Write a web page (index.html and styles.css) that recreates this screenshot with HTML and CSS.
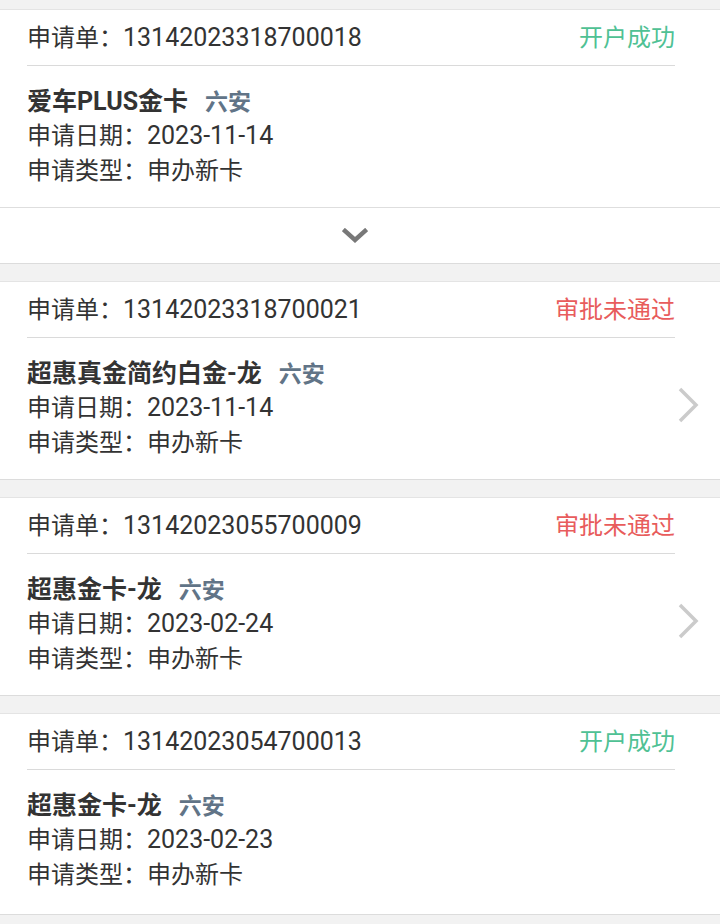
FILE: index.html
```html
<!DOCTYPE html>
<html lang="zh-CN">
<head>
<meta charset="utf-8">
<title>申请记录</title>
<link rel="stylesheet" href="styles.css">
</head>
<body>
<div class="list">
  <div class="group">
    <div class="card">
      <div class="head"><span class="no">申请单：<span class="num">13142023318700018</span></span><span class="status ok">开户成功</span></div>
      <div class="body">
        <div class="info">
          <div class="title">爱车PLUS金卡<span class="tag">六安</span></div>
          <div class="line">申请日期：<span class="num">2023-11-14</span></div>
          <div class="line">申请类型：申办新卡</div>
        </div>
      </div>
    </div>
    <div class="more">
      <svg width="26" height="16" viewBox="0 0 26 16"><polyline points="3,3 13,12 23,3" fill="none" stroke="#787878" stroke-width="4.5" stroke-linecap="square"/></svg>
    </div>
  </div>

  <div class="group">
    <div class="card">
      <div class="head"><span class="no">申请单：<span class="num">13142023318700021</span></span><span class="status bad">审批未通过</span></div>
      <div class="body">
        <div class="info">
          <div class="title">超惠真金简约白金-龙<span class="tag">六安</span></div>
          <div class="line">申请日期：<span class="num">2023-11-14</span></div>
          <div class="line">申请类型：申办新卡</div>
        </div>
        <svg class="arrow" width="24" height="38" viewBox="0 0 24 38"><polyline points="4,3 20,19 4,35" fill="none" stroke="#cbcbcb" stroke-width="3.5"/></svg>
      </div>
    </div>
  </div>

  <div class="group">
    <div class="card">
      <div class="head"><span class="no">申请单：<span class="num">13142023055700009</span></span><span class="status bad">审批未通过</span></div>
      <div class="body">
        <div class="info">
          <div class="title">超惠金卡-龙<span class="tag">六安</span></div>
          <div class="line">申请日期：<span class="num">2023-02-24</span></div>
          <div class="line">申请类型：申办新卡</div>
        </div>
        <svg class="arrow" width="24" height="38" viewBox="0 0 24 38"><polyline points="4,3 20,19 4,35" fill="none" stroke="#cbcbcb" stroke-width="3.5"/></svg>
      </div>
    </div>
  </div>

  <div class="group last">
    <div class="card">
      <div class="head"><span class="no">申请单：<span class="num">13142023054700013</span></span><span class="status ok">开户成功</span></div>
      <div class="body">
        <div class="info">
          <div class="title">超惠金卡-龙<span class="tag">六安</span></div>
          <div class="line">申请日期：<span class="num">2023-02-23</span></div>
          <div class="line">申请类型：申办新卡</div>
        </div>
      </div>
    </div>
  </div>
</div>
</body>
</html>
```

FILE: styles.css
```css
html, body {
  margin: 0;
  padding: 0;
}
body {
  background: #f2f2f2;
  font-family: Roboto, "Noto Sans CJK SC", sans-serif;
  color: #333333;
  font-size: 24px;
}
.list {
  padding-top: 9px;
  display: flex;
  flex-direction: column;
  gap: 17px;
}
.group {
  background: #ffffff;
  border-top: 1px solid #e4e4e4;
  border-bottom: 1px solid #dcdcdc;
}
.card {
  padding: 0 20px 0 27px;
}
.head {
  height: 55px;
  margin-right: 25px;
  display: flex;
  align-items: center;
  justify-content: space-between;
  border-bottom: 1px solid #dadada;
  line-height: 1;
}
.num {
  font-size: 25px;
  line-height: 1;
}
.status.ok { color: #4fc194; }
.status.bad { color: #e85c5c; }
.body {
  display: flex;
  align-items: center;
  padding: 18px 0 18px;
}
.last .body {
  padding-bottom: 21px;
}
.info {
  flex: 1;
  line-height: 35px;
}
.title,
.line {
  height: 35px;
  white-space: nowrap;
}
.title {
  font-size: 25px;
  font-weight: 700;
  color: #333333;
}
.tag {
  margin-left: 17px;
  font-size: 23px;
  color: #617487;
  font-weight: 700;
}
.arrow {
  display: block;
  margin-top: -8px;
}
.more {
  height: 55px;
  border-top: 1px solid #dedede;
  display: flex;
  align-items: center;
  justify-content: center;
}
.more svg {
  display: block;
  margin-left: -10px;
}
```
